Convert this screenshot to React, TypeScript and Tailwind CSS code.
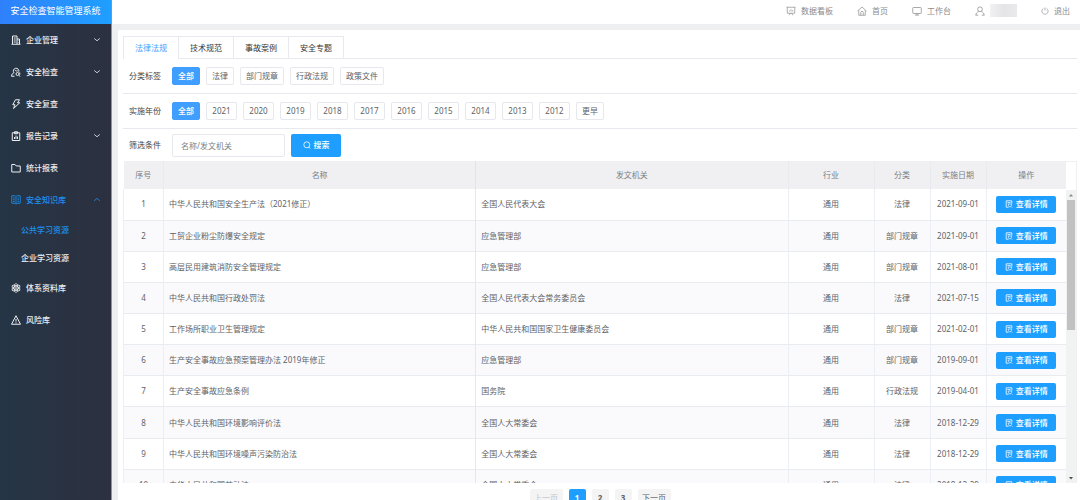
import type { ReactNode } from "react";

type IconProps = { children: ReactNode; className?: string };

function Icon({ children, className = "size-[10px]" }: IconProps) {
  return (
    <svg
      viewBox="0 0 20 20"
      fill="none"
      stroke="currentColor"
      strokeWidth="2"
      className={`shrink-0 ${className}`}
      aria-hidden="true"
    >
      {children}
    </svg>
  );
}

const BuildingIcon = () => (
  <Icon>
    <path d="M3 18V2h9v16M12 8h5v10M1 18.500h18M5.500 6h4M5.500 10h4M5.500 14h4M14.500 11v1M14.500 14.500v1" />
  </Icon>
);

const InspectIcon = () => (
  <Icon>
    <path d="M6 11.500a5.500 5.500 0 1 1 9.500-2M1 18.500c.3-4 2-6 5-7M1 18.500h6M8 6c1 2 3 2.500 5.500 1.500" />
    <circle cx="13" cy="14" r="3" />
    <path d="m15.500 16.500 3 2.500M17.500 11v4" />
  </Icon>
);

const BoltIcon = () => (
  <Icon>
    <path d="M9 1.500h8L13 7.500h4.500L5 19l3-7.500H3.500z" />
  </Icon>
);

const ReportIcon = () => (
  <Icon>
    <path d="M2.500 3.500h15V19h-15zM7 1.500h6v4H7zM7 16v-4M10 16V9M13 16v-5" />
  </Icon>
);

const FolderIcon = () => (
  <Icon>
    <path d="M1.500 3H8l2.500 3h8v12h-17z" />
  </Icon>
);

const BookIcon = () => (
  <Icon>
    <path
      strokeWidth="1.700"
      d="M10 3v15M10 3 8.500 1.500h-7v15h7L10 18.500l1.500-2h7v-15h-7zM4 6h3.500M4 9.500h3.500M4 13h3.500M13 6h3M13 9.500h3M13 13h3"
    />
  </Icon>
);

const AtomIcon = () => (
  <Icon>
    <ellipse cx="10" cy="10" rx="4" ry="9" strokeWidth="1.600" />
    <ellipse cx="10" cy="10" rx="4" ry="9" strokeWidth="1.600" transform="rotate(60 10 10)" />
    <ellipse cx="10" cy="10" rx="4" ry="9" strokeWidth="1.600" transform="rotate(120 10 10)" />
    <circle cx="10" cy="10" r="1.500" strokeWidth="1.400" />
  </Icon>
);

const RiskIcon = () => (
  <Icon>
    <path d="M10 1.500 1 18.500h18zM10 8v5M10 14.500v2" />
  </Icon>
);

const BoardIcon = () => (
  <Icon>
    <path strokeWidth="1.400" d="M1 2.500h18M2.500 2.500v12h15v-12M6 18.500l3-4M14 18.500l-3-4M6.500 11V9M10 11V6.500M13.500 11V8" />
  </Icon>
);

const HomeIcon = () => (
  <Icon>
    <path strokeWidth="1.400" d="m1 10 9-8 9 8M3.500 8.500v10h13v-10M7.500 18.500V13a2.500 2.500 0 0 1 5 0v5.500" />
  </Icon>
);

const MonitorIcon = () => (
  <Icon>
    <path strokeWidth="1.500" d="M3 3h14a1.500 1.500 0 0 1 1.500 1.500v9A1.500 1.500 0 0 1 17 15H3a1.500 1.500 0 0 1-1.500-1.500v-9A1.500 1.500 0 0 1 3 3zM10 15v3M6 18.200h8" />
  </Icon>
);

const UserIcon = () => (
  <Icon>
    <circle cx="10" cy="6.500" r="4.700" strokeWidth="1.500" />
    <path strokeWidth="1.500" d="M1.500 18.500c.5-4 3-6.500 6-7.500M18.500 18.500c-.5-4-3-6.500-6-7.500M1.500 18.300h5M13.500 18.300h5" />
  </Icon>
);

const PowerIcon = () => (
  <Icon className="size-2">
    <path strokeWidth="1.600" d="M10 1.500V9M6 3.500a7.800 7.800 0 1 0 8 0" />
  </Icon>
);

const SearchIcon = () => (
  <Icon className="size-2">
    <circle cx="9.500" cy="9.500" r="7.500" />
    <path d="m14.500 15 3.500 4" />
  </Icon>
);

const DetailIcon = () => (
  <Icon className="size-2">
    <path d="M17 9V2H3v16h6M6 6.500h8" />
    <path d="M8 10h8.500v3.500L12 18l-3.500-4.500zM15 16l3 3" strokeWidth="1.600" />
  </Icon>
);

function Chevron({ up }: { up?: boolean }) {
  return (
    <Icon className="ml-auto size-2">
      <path d={up ? "m3 12 7-6 7 6" : "m3 6 7 6 7-6"} />
    </Icon>
  );
}

type MenuItem = {
  label: string;
  icon: ReactNode;
  expandable?: boolean;
  children?: string[];
};

const menu: MenuItem[] = [
  { label: "企业管理", icon: <BuildingIcon />, expandable: true },
  { label: "安全检查", icon: <InspectIcon />, expandable: true },
  { label: "安全复查", icon: <BoltIcon /> },
  { label: "报告记录", icon: <ReportIcon />, expandable: true },
  { label: "统计报表", icon: <FolderIcon /> },
  {
    label: "安全知识库",
    icon: <BookIcon />,
    expandable: true,
    children: ["公共学习资源", "企业学习资源"],
  },
  { label: "体系资料库", icon: <AtomIcon /> },
  { label: "风险库", icon: <RiskIcon /> },
];

const tabs = ["法律法规", "技术规范", "事故案例", "安全专题"];
const categories = ["全部", "法律", "部门规章", "行政法规", "政策文件"];
const years = ["全部", "2021", "2020", "2019", "2018", "2017", "2016", "2015", "2014", "2013", "2012", "更早"];

const rows = [
  ["中华人民共和国安全生产法（2021修正）", "全国人民代表大会", "法律", "2021-09-01"],
  ["工贸企业粉尘防爆安全规定", "应急管理部", "部门规章", "2021-09-01"],
  ["高层民用建筑消防安全管理规定", "应急管理部", "部门规章", "2021-08-01"],
  ["中华人民共和国行政处罚法", "全国人民代表大会常务委员会", "法律", "2021-07-15"],
  ["工作场所职业卫生管理规定", "中华人民共和国国家卫生健康委员会", "部门规章", "2021-02-01"],
  ["生产安全事故应急预案管理办法 2019年修正", "应急管理部", "部门规章", "2019-09-01"],
  ["生产安全事故应急条例", "国务院", "行政法规", "2019-04-01"],
  ["中华人民共和国环境影响评价法", "全国人大常委会", "法律", "2018-12-29"],
  ["中华人民共和国环境噪声污染防治法", "全国人大常委会", "法律", "2018-12-29"],
  ["中华人民共和国劳动法", "全国人大常委会", "法律", "2018-12-29"],
];

function Sidebar() {
  return (
    <aside className="w-28 shrink-0 border-r border-[#8d929b] bg-linear-to-r from-[#253545] to-[#2c3040] text-white">
      <h1 className="flex h-6 items-center justify-center bg-linear-to-r from-[#2f80fb] to-[#1e9fff] pb-[3px] text-[9px]">
        安全检查智能管理系统
      </h1>
      <nav>
        {menu.map((item) => (
          <div key={item.label}>
            <button
              type="button"
              className={`flex h-8 w-full items-center gap-[5px] pr-[10px] pl-[11px] font-medium ${
                item.children ? "text-[#1e8fec]" : "text-[#eceef0]"
              }`}
            >
              {item.icon}
              {item.label}
              {item.expandable && <Chevron up={!!item.children} />}
            </button>
            {item.children?.map((child, i) => (
              <a
                key={child}
                href="#"
                className={`flex h-7 items-center pl-[21px] font-medium ${i === 0 ? "text-[#1e8fec]" : "text-[#eceef0]"}`}
              >
                {child}
              </a>
            ))}
          </div>
        ))}
      </nav>
    </aside>
  );
}

function TopBar() {
  return (
    <header className="flex h-6 shrink-0 items-center justify-end gap-6 bg-white pr-[10px] pb-[3px] text-[#8c8c8c]">
      <a href="#" className="flex items-center gap-[5px]">
        <BoardIcon />
        数据看板
      </a>
      <a href="#" className="flex items-center gap-[5px]">
        <HomeIcon />
        首页
      </a>
      <a href="#" className="flex items-center gap-[5px]">
        <MonitorIcon />
        工作台
      </a>
      <div className="flex items-center gap-[5px]">
        <UserIcon />
        <span className="h-[13px] w-[27px] bg-linear-to-r from-[#f1f1f2] via-[#e5e5e7] to-[#e9e9eb]" />
      </div>
      <a href="#" className="flex items-center gap-[5px]">
        <PowerIcon />
        退出
      </a>
    </header>
  );
}

function TagRow({ label, tags }: { label: string; tags: string[] }) {
  return (
    <div className="flex shrink-0 items-center border-b border-[#e8e9ee] py-2 pl-[6px]">
      <span className="w-[43px] text-[#444]">{label}</span>
      <div className="flex gap-[6px]">
        {tags.map((tag, i) => (
          <button
            key={tag}
            type="button"
            className={`h-[18px] rounded-xs border px-[5px] ${tag.startsWith("20") ? "min-w-[31px]" : ""} ${
              i === 0 ? "border-[#409eff] bg-[#409eff] font-medium text-white" : "border-[#e6e8ee] text-[#606266]"
            }`}
          >
            {tag}
          </button>
        ))}
      </div>
    </div>
  );
}

function LawTable() {
  return (
    <table className="h-[340px] w-full table-fixed border-collapse text-[#606266]">
      <thead>
        <tr className="h-7 bg-[#f0f0f2] text-[#7b7d82]">
          <th className="w-10 border-r border-[#e8eaef] font-normal">序号</th>
          <th className="border-r border-[#e0e3e9] font-normal">名称</th>
          <th className="border-r border-[#e8eaef] font-normal">发文机关</th>
          <th className="w-[86px] border-r border-[#e8eaef] font-normal">行业</th>
          <th className="w-14 border-r border-[#e8eaef] font-normal">分类</th>
          <th className="w-14 border-r border-[#e8eaef] font-normal">实施日期</th>
          <th className="w-20 font-normal">操作</th>
        </tr>
      </thead>
      <tbody className="text-center">
        {rows.map(([name, org, kind, date], i) => (
          <tr key={name} className="h-[31px] border-b border-[#e8ebf0] even:bg-[#fafafc]">
            <td className="border-x border-[#ebeef5]">{i + 1}</td>
            <td className="border-r border-[#e4e7ed] px-[5px] text-left">{name}</td>
            <td className="border-r border-[#ebeef5] px-[5px] text-left">{org}</td>
            <td className="border-r border-[#ebeef5]">通用</td>
            <td className="border-r border-[#ebeef5]">{kind}</td>
            <td className="border-r border-[#ebeef5] whitespace-nowrap">{date}</td>
            <td>
              <button
                type="button"
                className="mx-auto flex h-[17px] w-[60px] items-center justify-center gap-[3px] rounded-xs bg-[#1e9fff] font-medium text-white"
              >
                <DetailIcon />
                查看详情
              </button>
            </td>
          </tr>
        ))}
      </tbody>
    </table>
  );
}

function Scrollbar() {
  return (
    <div className="w-[11px] shrink-0 border-t border-r border-[#f0f0f2] pt-7">
      <div className="flex h-full flex-col items-center bg-[#f1f2f2]">
        <svg viewBox="0 0 10 10" className="size-[10px] fill-[#8a8a8a]" aria-hidden="true">
          <path d="M3 6.500h4L5 4z" />
        </svg>
        <div className="h-[130px] w-2 bg-[#c1c1c1]" />
        <svg viewBox="0 0 10 10" className="mt-auto size-[10px] fill-[#505050]" aria-hidden="true">
          <path d="M3 4h4L5 6.500z" />
        </svg>
      </div>
    </div>
  );
}

function Pagination() {
  return (
    <nav className="flex h-[17px] shrink-0 justify-center gap-[6px] pt-[6px] text-[#606266]">
      <button type="button" disabled className="h-[17px] w-[33px] shrink-0 rounded-xs bg-[#f4f4f5] text-[#c0c4cc]">
        上一页
      </button>
      {[1, 2, 3].map((page) => (
        <button
          key={page}
          type="button"
          className={`size-[17px] shrink-0 rounded-xs font-bold ${page === 1 ? "bg-[#1e9fff] text-white" : "bg-[#f4f4f5]"}`}
        >
          {page}
        </button>
      ))}
      <button type="button" className="h-[17px] w-[33px] shrink-0 rounded-xs bg-[#f4f4f5]">
        下一页
      </button>
    </nav>
  );
}

export default function App() {
  return (
    <div className="flex h-screen overflow-hidden bg-[#eeeff1] font-['Noto_Sans','Noto_Sans_CJK_SC',sans-serif] text-[8px] leading-3">
      <Sidebar />
      <div className="flex min-w-0 flex-1 flex-col">
        <TopBar />
        <main className="mt-[6px] ml-[6px] flex min-h-0 flex-1 flex-col overflow-hidden bg-white pt-[6px] pr-[3px] pl-[5px]">
          <div className="flex h-[23px] shrink-0 border-b border-[#e8e9ee]" role="tablist">
            {tabs.map((tab, i) => (
              <button
                key={tab}
                type="button"
                role="tab"
                aria-selected={i === 0}
                className={`h-[23px] border-t border-r border-[#e8e9ee] ${
                  i === 0 ? "w-14 border-l bg-white text-[#409eff]" : "w-[55px] text-[#333]"
                }`}
              >
                {tab}
              </button>
            ))}
          </div>
          <TagRow label="分类标签" tags={categories} />
          <TagRow label="实施年份" tags={years} />
          <form className="flex h-8 shrink-0 items-center pl-[6px]" onSubmit={(e) => e.preventDefault()}>
            <label htmlFor="keyword" className="w-[43px] text-[#444]">
              筛选条件
            </label>
            <input
              id="keyword"
              type="text"
              placeholder="名称/发文机关"
              className="h-[23px] w-[113px] rounded-xs border border-[#e6e8ee] px-2 placeholder:text-[#7c7e82]"
            />
            <button
              type="submit"
              className="ml-[6px] flex h-[23px] w-[50px] items-center justify-center gap-[3px] rounded-xs bg-[#1e9fff] font-medium text-white"
            >
              <SearchIcon />
              搜索
            </button>
          </form>
          <div className="flex min-h-0 flex-1">
            <div className="min-w-0 flex-1 overflow-hidden">
              <LawTable />
            </div>
            <Scrollbar />
          </div>
          <Pagination />
        </main>
      </div>
    </div>
  );
}
